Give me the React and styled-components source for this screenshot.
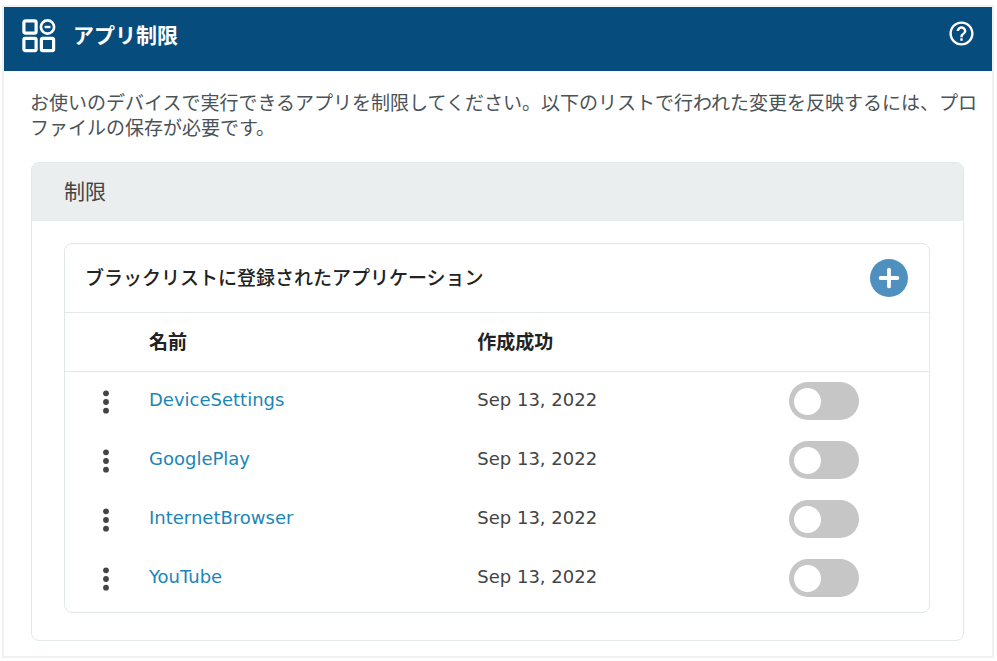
import React from 'react';
import styled, { createGlobalStyle } from 'styled-components';
import { MdHelpOutline } from 'react-icons/md';

const GlobalStyle = createGlobalStyle`
  *, *::before, *::after { box-sizing: border-box; }
  body {
    margin: 0;
    background: #fff;
    color: #444;
    font: 19px/25px "Noto Sans CJK JP", sans-serif;
  }
`;

const Frame = styled.main`
  margin: 5px 3px 3px 2px;
  border: 2px solid #f1f1f1;
`;

const Header = styled.header`
  display: flex;
  align-items: center;
  height: 64px;
  padding: 0 16px 6px 18px;
  background: #064c7c;
  color: #fff;
`;

const Title = styled.h1`
  flex: 1;
  margin: 0 0 0 17px;
  padding-bottom: 4px;
  font-size: 21px;
  line-height: 32px;
`;

const IconButton = styled.button`
  display: flex;
  align-items: center;
  justify-content: center;
  padding: 0;
  border: 0;
  background: none;
  color: inherit;
  cursor: pointer;
`;

const HelpButton = styled(IconButton)`
  padding-bottom: 6px;
`;

const Intro = styled.p`
  margin: 0;
  padding: 18px 0 0 26px;
  color: #4a5358;
`;

const Section = styled.section`
  margin: 23px 28px 15px 27px;
  border: 1px solid #e2e7ea;
  border-radius: 8px;
  overflow: hidden;
`;

const SectionTitle = styled.h2`
  margin: 0;
  padding: 11px 32px 15px;
  background: #eaeeef;
  font-size: 21px;
  font-weight: 400;
  line-height: 32px;
`;

const ListCard = styled.div`
  margin: 22px 33px 27px 32px;
  padding-bottom: 4px;
  border: 1px solid #e2e7ea;
  border-radius: 8px;
`;

const ListHead = styled.div`
  display: flex;
  align-items: center;
  justify-content: space-between;
  height: 69px;
  padding: 0 21px 0 20px;
  border-bottom: 1px solid #e2e7ea;
`;

const ListTitle = styled.h3`
  margin: 0;
  padding-bottom: 2px;
  font-size: 19px;
  font-weight: 500;
  line-height: 28px;
  color: #222;
`;

const AddButton = styled(IconButton)`
  width: 38px;
  height: 38px;
  border-radius: 50%;
  background: #4f90bf;
  color: #fff;
`;

const Table = styled.table`
  width: 100%;
  table-layout: fixed;
  border-collapse: separate;
  border-spacing: 0;
`;

const Th = styled.th`
  width: ${(p) => p.$width || 'auto'};
  height: 59px;
  padding: 0 0 4px;
  border-bottom: 1px solid #e2e7ea;
  text-align: left;
  color: #222;
`;

const Td = styled.td`
  height: 59px;
  padding: 0;
  vertical-align: middle;
  font-family: "DejaVu Sans", sans-serif;
  font-size: 18px;
`;

const TextCell = styled(Td)`
  padding-bottom: 4px;
`;

const SwitchCell = styled(Td)`
  padding: 0 0 1px 1px;
`;

const MenuButton = styled(IconButton)`
  width: 82px;
  color: #444;
`;

const AppLink = styled.a`
  color: #1b86b7;
  text-decoration: none;
`;

const Switch = styled.input`
  appearance: none;
  display: flex;
  align-items: center;
  width: 70px;
  height: 38px;
  margin: 0;
  padding: 0 5px;
  border-radius: 19px;
  background: #c6c6c6;
  cursor: pointer;

  &::before {
    content: "";
    width: 27px;
    height: 27px;
    border-radius: 50%;
    background: #fff;
  }
  &:checked { background: #4f90bf; justify-content: flex-end; }
`;

const apps = ['DeviceSettings', 'GooglePlay', 'InternetBrowser', 'YouTube'];

function AppsIcon() {
  return (
    <svg width="34" height="34" viewBox="0 0 34 34" fill="none" stroke="#fff" strokeWidth="3.2" aria-hidden="true">
      <rect x="1.9" y="1.9" width="12.2" height="12.2" rx="1.4" />
      <rect x="1.9" y="19.4" width="12.2" height="12.2" rx="1.4" />
      <rect x="19.4" y="19.4" width="12.2" height="12.2" rx="1.4" />
      <circle cx="25.5" cy="8" r="6.6" strokeWidth="2.7" />
      <path d="M22.6 8h5.8" strokeWidth="2.4" />
    </svg>
  );
}

function DotsIcon() {
  return (
    <svg width="8" height="26" viewBox="0 0 8 26" fill="currentColor" aria-hidden="true">
      <circle cx="4" cy="4.3" r="2.9" />
      <circle cx="4" cy="13" r="2.9" />
      <circle cx="4" cy="21.7" r="2.9" />
    </svg>
  );
}

function PlusIcon() {
  return (
    <svg width="22" height="22" viewBox="0 0 22 22" stroke="currentColor" strokeWidth="3.8" strokeLinecap="round" aria-hidden="true">
      <path d="M11 2.6v16.8M2.6 11h16.8" />
    </svg>
  );
}

export default function App() {
  return (
    <>
      <GlobalStyle />
      <Frame>
        <Header>
          <AppsIcon />
          <Title>アプリ制限</Title>
          <HelpButton type="button" aria-label="ヘルプ">
            <MdHelpOutline size={29} />
          </HelpButton>
        </Header>
        <Intro>
          お使いのデバイスで実行できるアプリを制限してください。以下のリストで行われた変更を反映するには、プロファイルの保存が必要です。
        </Intro>
        <Section>
          <SectionTitle>制限</SectionTitle>
          <ListCard>
            <ListHead>
              <ListTitle>ブラックリストに登録されたアプリケーション</ListTitle>
              <AddButton type="button" aria-label="追加">
                <PlusIcon />
              </AddButton>
            </ListHead>
            <Table>
              <thead>
                <tr>
                  <Th $width="84px" />
                  <Th scope="col" $width="38%">名前</Th>
                  <Th scope="col" $width="36%">作成成功</Th>
                  <Th />
                </tr>
              </thead>
              <tbody>
                {apps.map((name) => (
                  <tr key={name}>
                    <Td>
                      <MenuButton type="button" aria-label={`${name} メニュー`}>
                        <DotsIcon />
                      </MenuButton>
                    </Td>
                    <TextCell><AppLink href="#">{name}</AppLink></TextCell>
                    <TextCell>Sep 13, 2022</TextCell>
                    <SwitchCell><Switch type="checkbox" role="switch" aria-label={name} /></SwitchCell>
                  </tr>
                ))}
              </tbody>
            </Table>
          </ListCard>
        </Section>
      </Frame>
    </>
  );
}
